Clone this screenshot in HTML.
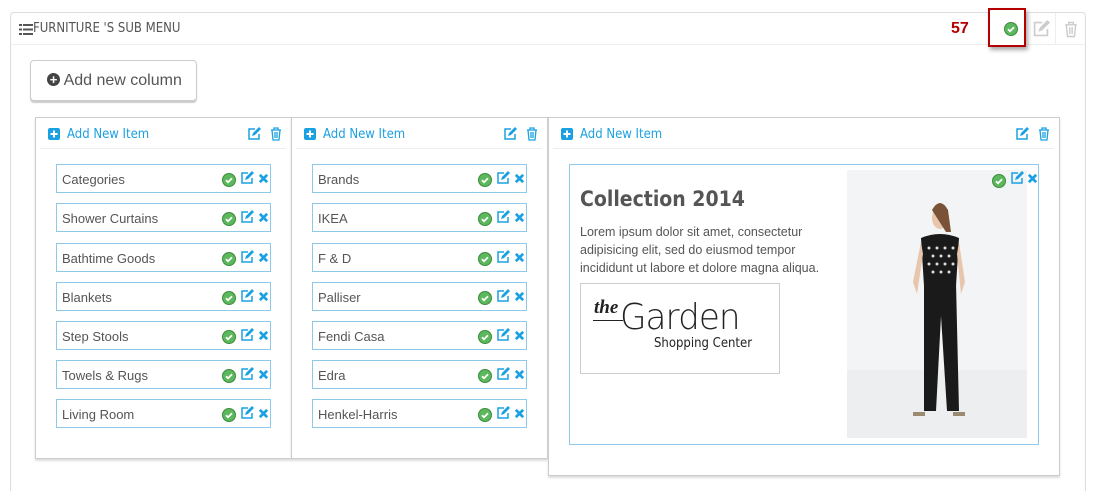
<!DOCTYPE html>
<html style="width:1102px;height:491px;overflow:hidden"><head><meta charset="utf-8"><style>
*{box-sizing:border-box;margin:0;padding:0}
body{width:1102px;height:491px;background:#fff;position:relative;overflow:hidden;font-family:"Liberation Sans",sans-serif;color:#555}
.a{position:absolute}
.panel{left:10px;top:12px;width:1076px;height:479px;border:1px solid #ddd;border-bottom:none;border-radius:4px 4px 0 0}
.hdr{left:11px;top:44px;width:1074px;height:1px;background:#eee}
.title{font-size:13px;color:#555;font-family:"DejaVu Sans Condensed",sans-serif}
.btn{left:30px;top:60px;width:167px;height:41px;border:1px solid #ccc;border-radius:4px;box-shadow:0 2px 1px #ccc;font-size:16px;color:#555;padding:11px 0 0 16px}
.col{border:1px solid #ccc;box-shadow:0 2px 2px #ddd;background:#fff}
.ch{font-size:13px;color:#1ba1e2;font-family:"DejaVu Sans Condensed",sans-serif}
.line{height:1px;background:#eee}
.item{width:215px;height:29px;border:1px solid #8ec9ea;font-size:13px;color:#555;padding:7px 0 0 5px}
</style></head><body>
<svg width="0" height="0" style="position:absolute">
<defs>
<symbol id="ok" viewBox="0 0 14 14"><circle cx="7" cy="7" r="6.5" fill="#5cb85c" stroke="#3d8b3d" stroke-width="1"/><path d="M4 7.2l2 2 4-4" stroke="#fff" stroke-width="1.8" fill="none"/></symbol>
<symbol id="ed" viewBox="0 0 14 14"><path d="M8 2H2v10h10V7" stroke="#1ba1e2" stroke-width="1.5" fill="none"/><path d="M5 9l1-3 6-6 2 2-6 6z" fill="#1ba1e2"/></symbol>
<symbol id="x" viewBox="0 0 12 12"><path d="M2 2l8 8M10 2l-8 8" stroke="#1ba1e2" stroke-width="3"/></symbol>
<symbol id="tr" viewBox="0 0 12 14"><path d="M1 3h10M4 3V1h4v2M2 3l1 10h6l1-10M5 5v6M7 5v6" stroke="#1ba1e2" stroke-width="1.3" fill="none"/></symbol>
<symbol id="pl" viewBox="0 0 12 12"><rect width="12" height="12" rx="2" fill="#1ba1e2"/><path d="M6 2.5v7M2.5 6h7" stroke="#fff" stroke-width="2"/></symbol>
</defs></svg>

<div class="a panel"></div>
<div class="a hdr"></div>
<div class="a" style="left:1055px;top:13px;width:1px;height:31px;background:#eee"></div>
<svg class="a" style="left:19px;top:24px" width="14" height="11"><g fill="#555"><rect x="0" y="0" width="3" height="2"/><rect x="0" y="4.5" width="3" height="2"/><rect x="0" y="9" width="3" height="2"/><rect x="4" y="0" width="10" height="2"/><rect x="4" y="4.5" width="10" height="2"/><rect x="4" y="9" width="10" height="2"/></g></svg>
<div class="a title" style="left:33px;top:21px">FURNITURE 'S SUB MENU</div>
<div class="a" style="left:951px;top:20px;font-size:16px;font-weight:bold;color:#b30000">57</div>
<div class="a" style="left:988px;top:8px;width:38px;height:39px;border:2px solid #b30000;box-shadow:2px 3px 4px #aaa;background:#fff"></div>
<svg class="a" style="left:1004px;top:22px" width="14" height="14"><use href="#ok"/></svg>
<svg class="a" style="left:1032px;top:20px" width="18" height="18" viewBox="0 0 14 14"><path d="M8 2H2v10h10V7" stroke="#ccc" stroke-width="1.3" fill="none"/><path d="M5 9l1-3 6-6 2 2-6 6z" fill="#ccc"/></svg>
<svg class="a" style="left:1064px;top:21px" width="14" height="17" viewBox="0 0 12 14"><path d="M1 3h10M4 3V1h4v2M2 3l1 10h6l1-10M5 5v6M7 5v6" stroke="#ccc" stroke-width="1.2" fill="none"/></svg>

<div class="a btn"><span style="display:inline-block;width:13px;height:13px;border-radius:50%;background:#444;color:#fff;font-size:13px;line-height:13px;text-align:center;font-weight:bold;vertical-align:1px">+</span> Add new column</div>

<div class="a col" style="left:35px;top:117px;width:257px;height:342px"></div>
<div class="a col" style="left:291px;top:117px;width:257px;height:342px"></div>
<div class="a col" style="left:548px;top:117px;width:512px;height:359px"></div>

<div id="c"></div>

<div class="a" style="left:569px;top:164px;width:470px;height:281px;border:1px solid #8ec9ea"></div>
<div class="a" style="left:580px;top:187px;font-size:21px;font-weight:bold;color:#555;font-family:'DejaVu Sans Condensed',sans-serif">Collection 2014</div>
<div class="a" style="left:580px;top:223px;font-size:12.5px;line-height:18px;color:#555;width:265px">Lorem ipsum dolor sit amet, consectetur adipisicing elit, sed do eiusmod tempor incididunt ut labore et dolore magna aliqua.</div>
<div class="a" style="left:580px;top:283px;width:200px;height:91px;border:1px solid #ccc"></div>
<div class="a" style="left:594px;top:297px;font-family:'Liberation Serif',serif;font-style:italic;font-weight:bold;font-size:19px;color:#222">the</div>
<div class="a" style="left:593px;top:320px;width:30px;height:1px;background:#222"></div>
<div class="a" style="left:620px;top:297px;font-size:36px;color:#222;letter-spacing:-1px;font-family:'DejaVu Sans',sans-serif;font-weight:200;transform:scaleX(0.95);transform-origin:left">Garden</div>
<div class="a" style="left:654px;top:336px;font-size:13px;color:#222;font-family:'DejaVu Sans Condensed',sans-serif">Shopping Center</div>

<svg class="a" style="left:847px;top:170px" width="180" height="268">
<rect width="180" height="268" fill="#f3f4f6"/>
<rect y="200" width="180" height="68" fill="#eceef0"/>
<ellipse cx="93" cy="48" rx="8" ry="11" fill="#e7c6ad"/>
<path d="M85 40q8-14 16 0l3 22-5 0z" fill="#7a5238"/>
<path d="M74 68q19-8 38 0l-3 48-32 0z" fill="#1a1a1a"/>
<path d="M74 72l-8 40 4 12 6-40zM112 72l6 40-4 12-4-40z" fill="#e7c6ad"/>
<path d="M77 113h32l3 128-12 0-6-95-5 95-12 0z" fill="#1a1a1a"/>
<g fill="#ddd"><circle cx="82" cy="78" r="1.5"/><circle cx="90" cy="78" r="1.5"/><circle cx="98" cy="78" r="1.5"/><circle cx="106" cy="78" r="1.5"/><circle cx="86" cy="86" r="1.5"/><circle cx="94" cy="86" r="1.5"/><circle cx="102" cy="86" r="1.5"/><circle cx="82" cy="94" r="1.5"/><circle cx="90" cy="94" r="1.5"/><circle cx="98" cy="94" r="1.5"/><circle cx="106" cy="94" r="1.5"/><circle cx="86" cy="102" r="1.5"/><circle cx="94" cy="102" r="1.5"/><circle cx="102" cy="102" r="1.5"/></g>
<rect x="66" y="242" width="12" height="4" fill="#9a8a70"/><rect x="106" y="242" width="12" height="4" fill="#9a8a70"/>
</svg>
<svg class="a" style="left:992px;top:174px" width="14" height="14"><use href="#ok"/></svg>
<svg class="a" style="left:1010px;top:171px" width="14" height="14"><use href="#ed"/></svg>
<svg class="a" style="left:1027px;top:173px" width="11" height="11"><use href="#x"/></svg>

<script>
var cols=[[35,["Categories","Shower Curtains","Bathtime Goods","Blankets","Step Stools","Towels & Rugs","Living Room"]],[291,["Brands","IKEA","F & D","Palliser","Fendi Casa","Edra","Henkel-Harris"]],[548,[]]];
var ys=[164,203,243,282,321,360,399],h='';
cols.forEach(function(c){var x=c[0],w=c[0]==548?512:257;
h+='<svg class="a" style="left:'+(x+13)+'px;top:128px" width="12" height="12"><use href="#pl"/></svg>';
h+='<div class="a ch" style="left:'+(x+32)+'px;top:127px">Add New Item</div>';
h+='<svg class="a" style="left:'+(x+w-45)+'px;top:127px" width="14" height="14"><use href="#ed"/></svg>';
h+='<svg class="a" style="left:'+(x+w-22)+'px;top:127px" width="12" height="14"><use href="#tr"/></svg>';
h+='<div class="a line" style="left:'+(x+5)+'px;top:148px;width:'+(w-11)+'px"></div>';
c[1].forEach(function(t,i){var ix=x+21;
h+='<div class="a item" style="left:'+ix+'px;top:'+ys[i]+'px">'+t.replace('&','&amp;')+'</div>';
h+='<svg class="a" style="left:'+(ix+166)+'px;top:'+(ys[i]+9)+'px" width="14" height="14"><use href="#ok"/></svg>';
h+='<svg class="a" style="left:'+(ix+184)+'px;top:'+(ys[i]+7)+'px" width="14" height="14"><use href="#ed"/></svg>';
h+='<svg class="a" style="left:'+(ix+202)+'px;top:'+(ys[i]+9)+'px" width="11" height="11"><use href="#x"/></svg>';
});});
document.getElementById('c').innerHTML=h;
</script>
</body></html>
